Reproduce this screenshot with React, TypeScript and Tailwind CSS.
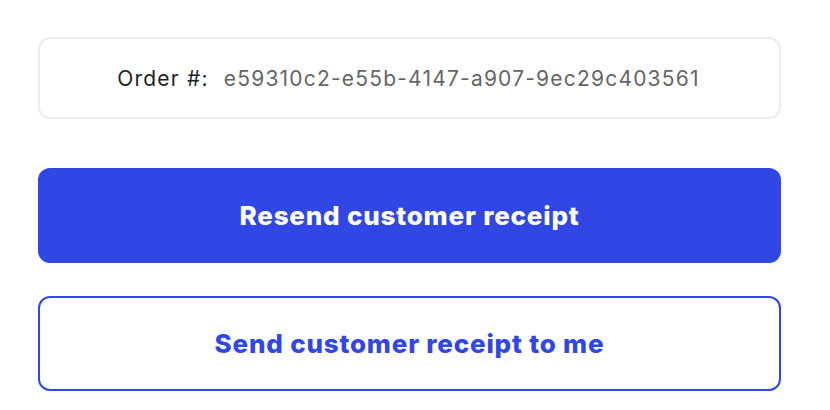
export default function App() {
  return (
    <div
      className="min-h-[410px] bg-white pt-[37px] pl-[38px]"
      style={{ fontFamily: "Inter, 'Noto Sans', sans-serif" }}
    >
      <div className="flex w-[743px] flex-col">
        <div className="flex h-[82px] items-center justify-center gap-[15px] rounded-[12px] border-2 border-[#ececec] pt-[2px] pr-[2px]">
          <span className="text-[21px] tracking-[1.2px] text-[#1f1f1f]">Order #:</span>
          <span className="text-[21px] tracking-[1.2px] text-[#666666]">e59310c2-e55b-4147-a907-9ec29c403561</span>
        </div>

        <button
          type="button"
          className="mt-[49px] flex h-[95px] items-center justify-center rounded-[12px] bg-[#3047e6] text-[26px] font-extrabold tracking-[0.8px] text-white"
        >
          Resend customer receipt
        </button>

        <button
          type="button"
          className="mt-[33px] flex h-[95px] items-center justify-center rounded-[12px] border-2 border-[#3047e6] bg-white text-[26px] font-extrabold tracking-[0.8px] text-[#3047e6]"
        >
          Send customer receipt to me
        </button>
      </div>
    </div>
  );
}
